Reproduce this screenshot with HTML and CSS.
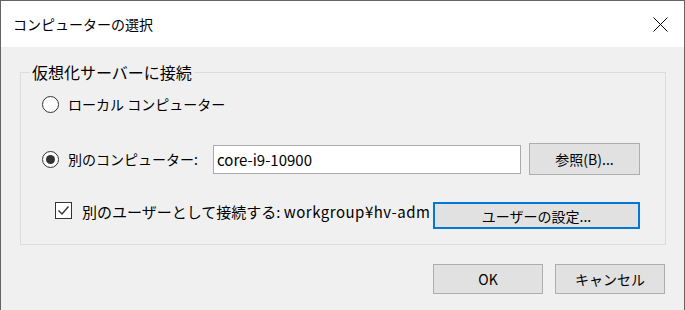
FILE: index.html
```html
<!DOCTYPE html>
<html lang="ja">
<head>
    <meta charset="UTF-8">
    <meta name="viewport" content="width=device-width, initial-scale=1.0">
    <title>コンピューターの選択</title>
    <link rel="stylesheet" href="styles.css">
</head>
<body>
    <div class="window">
        <div class="titlebar">
            <span class="title">コンピューターの選択</span>
            <svg class="close" width="15" height="15" viewBox="0 0 15 15">
                <path d="M0.5 0.5 L14.5 14.5 M14.5 0.5 L0.5 14.5" stroke="#000" stroke-width="1" fill="none"/>
            </svg>
        </div>
        <div class="client">
            <fieldset class="group">
                <legend>仮想化サーバーに接続</legend>
                <div class="row row-local">
                    <span class="radio"></span>
                    <span class="label">ローカル コンピューター</span>
                </div>
                <div class="row row-remote">
                    <span class="radio checked"></span>
                    <span class="label remote-label">別のコンピューター:</span>
                    <div class="textbox">core-i9-10900</div>
                    <button class="btn browse">参照(B)...</button>
                </div>
                <div class="row row-user">
                    <span class="check">
                        <svg width="15" height="15" viewBox="0 0 15 15">
                            <path d="M2.5 7.5 L6 11 L12.5 3.5" stroke="#333" stroke-width="1.4" fill="none"/>
                        </svg>
                    </span>
                    <span class="label user-label">別のユーザーとして接続する: <span class="account">workgroup¥hv-adm</span></span>
                    <button class="btn default user-btn">ユーザーの設定...</button>
                </div>
            </fieldset>
            <div class="actions">
                <button class="btn action">OK</button>
                <button class="btn action">キャンセル</button>
            </div>
        </div>
    </div>
</body>
</html>
```
FILE: styles.css
```css
body {
    margin: 0;
    padding: 0;
    font-family: "Noto Sans CJK JP", sans-serif;
    color: #000;
    background-color: #f0f0f0;
}

.window {
    width: 685px;
    height: 320px;
    box-sizing: border-box;
    border: 1px solid #646464;
    background-color: #f0f0f0;
}

.titlebar {
    height: 46px;
    background-color: #fff;
    display: flex;
    align-items: center;
    justify-content: space-between;
    padding: 0 16px 0 12px;
}

.title {
    font-size: 14px;
    line-height: 20px;
}

.close {
    display: block;
}

.client {
    padding: 15px 18px 0 19px;
}

.group {
    margin: 0;
    min-width: 0;
    border: 1px solid #dcdcdc;
    padding: 7px 18px 15px 21px;
}

.group legend {
    margin-left: -12px;
    padding: 0 2px;
    font-size: 16px;
    line-height: 20px;
}

.row {
    display: flex;
    align-items: center;
}

.row-local {
    height: 30px;
}

.row-remote {
    height: 32px;
    margin-top: 24px;
}

.row-user {
    height: 27px;
    margin-top: 27px;
    align-items: flex-start;
    padding-left: 13px;
}

.label {
    font-size: 14px;
    line-height: 18px;
    white-space: nowrap;
}

.radio {
    width: 17px;
    height: 17px;
    box-sizing: border-box;
    border: 1px solid #333;
    border-radius: 50%;
    background-color: #fff;
    margin-right: 9px;
    display: flex;
    align-items: center;
    justify-content: center;
    flex-shrink: 0;
}

.radio.checked::after {
    content: "";
    width: 9px;
    height: 9px;
    border-radius: 50%;
    background-color: #333;
}

.remote-label {
    width: 145px;
}

.textbox {
    width: 308px;
    height: 29px;
    box-sizing: border-box;
    border: 1px solid #ababab;
    background-color: #fff;
    padding-left: 3px;
    font-size: 15px;
    line-height: 27px;
    margin-right: 8px;
}

.btn {
    font-family: inherit;
    font-size: 14px;
    color: #000;
    background-color: #e1e1e1;
    border: 1px solid #adadad;
    padding: 0;
    box-sizing: border-box;
}

.browse {
    width: 111px;
    height: 32px;
}

.check {
    width: 17px;
    height: 17px;
    box-sizing: border-box;
    border: 1px solid #333;
    background-color: #fff;
    margin-right: 10px;
    display: flex;
    align-items: center;
    justify-content: center;
    flex-shrink: 0;
}

.check svg {
    display: block;
}

.user-label {
    width: 351px;
    margin-top: 1px;
    font-size: 15px;
}

.account {
    letter-spacing: 0.5px;
}

.default {
    border: 2px solid #0078d7;
}

.user-btn {
    width: 207px;
    height: 27px;
}

.actions {
    display: flex;
    justify-content: flex-end;
    gap: 12px;
    margin-top: 19px;
    padding-right: 1px;
}

.action {
    width: 110px;
    height: 30px;
}
```
